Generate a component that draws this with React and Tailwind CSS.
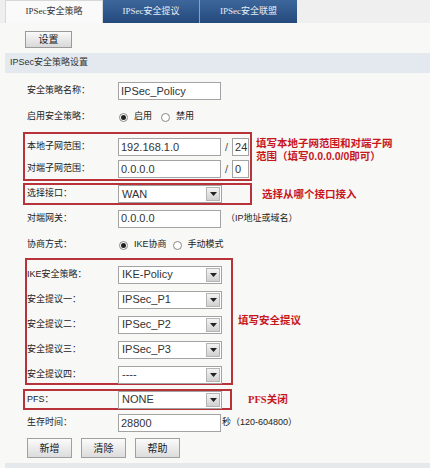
import React from 'react';

const font = "font-['Liberation_Sans','Noto_Sans_CJK_SC',sans-serif]";

const TextBox = ({ value, w = 'w-[103px]' }) => (
    <div className={`${w} h-[18px] border border-[#a3a3a3] bg-white px-[2px] flex items-center text-[11px] text-[#333] leading-none`}>
        {value}
    </div>
);

const Select = ({ value, w = 'w-[104px]' }) => (
    <div className={`${w} h-[18px] border border-[#a3a3a3] bg-white flex items-center justify-between pl-[3px] pr-[1px] text-[11px] text-[#333] leading-none`}>
        <span>{value}</span>
        <span className="w-[14px] h-[14px] bg-gradient-to-b from-[#f4f4f4] to-[#d0d0d0] border border-[#b5b5b5] flex items-center justify-center">
            <svg width="7" height="4" viewBox="0 0 7 4"><path d="M0 0h7L3.5 4z" fill="#222" /></svg>
        </span>
    </div>
);

const Radio = ({ on }) => (
    <span className="w-[9px] h-[9px] rounded-full border border-[#888] bg-white flex items-center justify-center">
        {on && <span className="w-[5px] h-[5px] rounded-full bg-[#222]"></span>}
    </span>
);

const Row = ({ label, h, lw = 'w-[91px]', children }) => (
    <div className={`flex items-center ${h}`}>
        <div className={`${lw} text-[9px] text-[#222] shrink-0`}>{label}</div>
        {children}
    </div>
);

const Note = ({ children, className = '' }) => (
    <div className={`text-[10.5px] font-bold text-[#c8161d] leading-[13px] ${className}`}>{children}</div>
);

const Btn = ({ children, w = 'w-[45px]' }) => (
    <div className={`${w} h-[20px] border border-[#a0a0a0] bg-gradient-to-b from-[#fbfbfb] to-[#dcdcdc] flex items-center justify-center text-[10px] text-[#222]`}>
        {children}
    </div>
);

const App = () => {
    return (
        <div className={`w-[430px] h-[468px] overflow-hidden bg-[#f8f8f6] ${font}`}>
            {/* Tabs */}
            <div className="h-[23px] bg-[#efefef] flex items-end pl-[5px] font-['Liberation_Serif','Noto_Sans_CJK_SC',serif] text-[9px]">
                <div className="w-[98px] h-[23px] bg-[#fafafa] border-t border-l border-r border-[#d8d8d8] flex items-center justify-center text-[#333]">IPSec安全策略</div>
                <div className="w-[97px] h-[23px] bg-gradient-to-b from-[#3d679c] to-[#24497c] flex items-center justify-center text-[#e8eef6] border-r border-[#8aa2c0]">IPSec安全提议</div>
                <div className="w-[97px] h-[23px] bg-gradient-to-b from-[#3d679c] to-[#24497c] flex items-center justify-center text-[#e8eef6]">IPSec安全联盟</div>
            </div>

            {/* Settings button */}
            <div className="pl-[25px] pt-[8px] h-[30px]">
                <div className="w-[47px] h-[17px] border border-[#9a9a9a] bg-gradient-to-b from-[#fafafa] to-[#d8d8d8] flex items-center justify-center text-[10px] text-[#222]">设置</div>
            </div>

            {/* Section header */}
            <div className="ml-[5px] h-[20px] bg-[#e3e9ee] flex items-center pl-[5px] text-[9px] text-[#333]">IPSec安全策略设置</div>

            {/* Form */}
            <div className="pl-[23px] pt-[6px]">
                <div className="pl-[4px]">
                    <Row label="安全策略名称：" h="h-[24px]">
                        <TextBox value="IPSec_Policy" />
                    </Row>
                    <Row label="启用安全策略：" h="h-[28px]">
                        <div className="flex items-center text-[9px] text-[#222] pl-[1px]">
                            <Radio on />
                            <span className="ml-[6px]">启用</span>
                            <span className="ml-[9px]"><Radio /></span>
                            <span className="ml-[6px]">禁用</span>
                        </div>
                    </Row>
                </div>

                {/* Subnet box */}
                <div className="flex items-start mt-[1px]">
                    <div className="w-[229px] h-[49px] border-2 border-[#b8323a] pl-[2px] pt-[2px]">
                        <Row label="本地子网范围：" h="h-[22px]">
                            <TextBox value="192.168.1.0" />
                            <span className="mx-[4px] text-[11px] text-[#555]">/</span>
                            <TextBox value="24" w="w-[17px]" />
                        </Row>
                        <Row label="对端子网范围：" h="h-[22px]">
                            <TextBox value="0.0.0.0" />
                            <span className="mx-[4px] text-[11px] text-[#555]">/</span>
                            <TextBox value="0" w="w-[17px]" />
                        </Row>
                    </div>
                    <Note className="ml-[4px] mt-[5px]">填写本地子网范围和对端子网<br />范围（填写0.0.0.0/0即可）</Note>
                </div>

                {/* Interface box */}
                <div className="flex items-center mt-[2px]">
                    <div className="w-[229px] h-[22px] border-2 border-[#b8323a] pl-[2px] flex items-center">
                        <Row label="选择接口：" h="h-[18px]">
                            <Select value="WAN" />
                        </Row>
                    </div>
                    <Note className="ml-[10px]">选择从哪个接口接入</Note>
                </div>

                <div className="pl-[4px]">
                    <Row label="对端网关：" h="h-[27px]">
                        <TextBox value="0.0.0.0" />
                        <span className="ml-[5px] text-[9px] text-[#222]">（IP地址或域名）</span>
                    </Row>
                    <Row label="协商方式：" h="h-[26px]">
                        <div className="flex items-center text-[9px] text-[#222] pl-[1px]">
                            <Radio on />
                            <span className="ml-[6px]">IKE协商</span>
                            <span className="ml-[6px]"><Radio /></span>
                            <span className="ml-[6px]">手动模式</span>
                        </div>
                    </Row>
                </div>

                {/* Proposal box */}
                <div className="flex items-center">
                    <div className="ml-[2px] w-[208px] h-[127px] border-2 border-[#b8323a] pt-[2px]">
                        <Row label="IKE安全策略：" h="h-[25px]">
                            <Select value="IKE-Policy" />
                        </Row>
                        <Row label="安全提议一：" h="h-[25px]">
                            <Select value="IPSec_P1" />
                        </Row>
                        <Row label="安全提议二：" h="h-[25px]">
                            <Select value="IPSec_P2" />
                        </Row>
                        <Row label="安全提议三：" h="h-[25px]">
                            <Select value="IPSec_P3" />
                        </Row>
                        <Row label="安全提议四：" h="h-[25px]">
                            <Select value="----" />
                        </Row>
                    </div>
                    <Note className="ml-[5px] mb-[2px]">填写安全提议</Note>
                </div>

                {/* PFS box */}
                <div className="flex items-center mt-[4px]">
                    <div className="w-[209px] h-[21px] border-2 border-[#b8323a] pl-[2px] flex items-center">
                        <Row label="PFS：" h="h-[17px]">
                            <Select value="NONE" />
                        </Row>
                    </div>
                    <Note className="ml-[16px] font-['Liberation_Serif','Noto_Sans_CJK_SC',serif]">PFS关闭</Note>
                </div>

                <div className="pl-[4px]">
                    <Row label="生存时间：" h="h-[26px]">
                        <TextBox value="28800" />
                        <span className="ml-[1px] text-[9px] text-[#222]">秒（120-604800）</span>
                    </Row>
                </div>

                {/* Action buttons */}
                <div className="flex items-center gap-[9px] pl-[4px] mt-[2px]">
                    <Btn>新增</Btn>
                    <Btn>清除</Btn>
                    <Btn>帮助</Btn>
                </div>
            </div>

            <div className="mt-[5px] ml-[5px] h-[8px] bg-[#e6e9ec]"></div>
        </div>
    );
};

export default App;
